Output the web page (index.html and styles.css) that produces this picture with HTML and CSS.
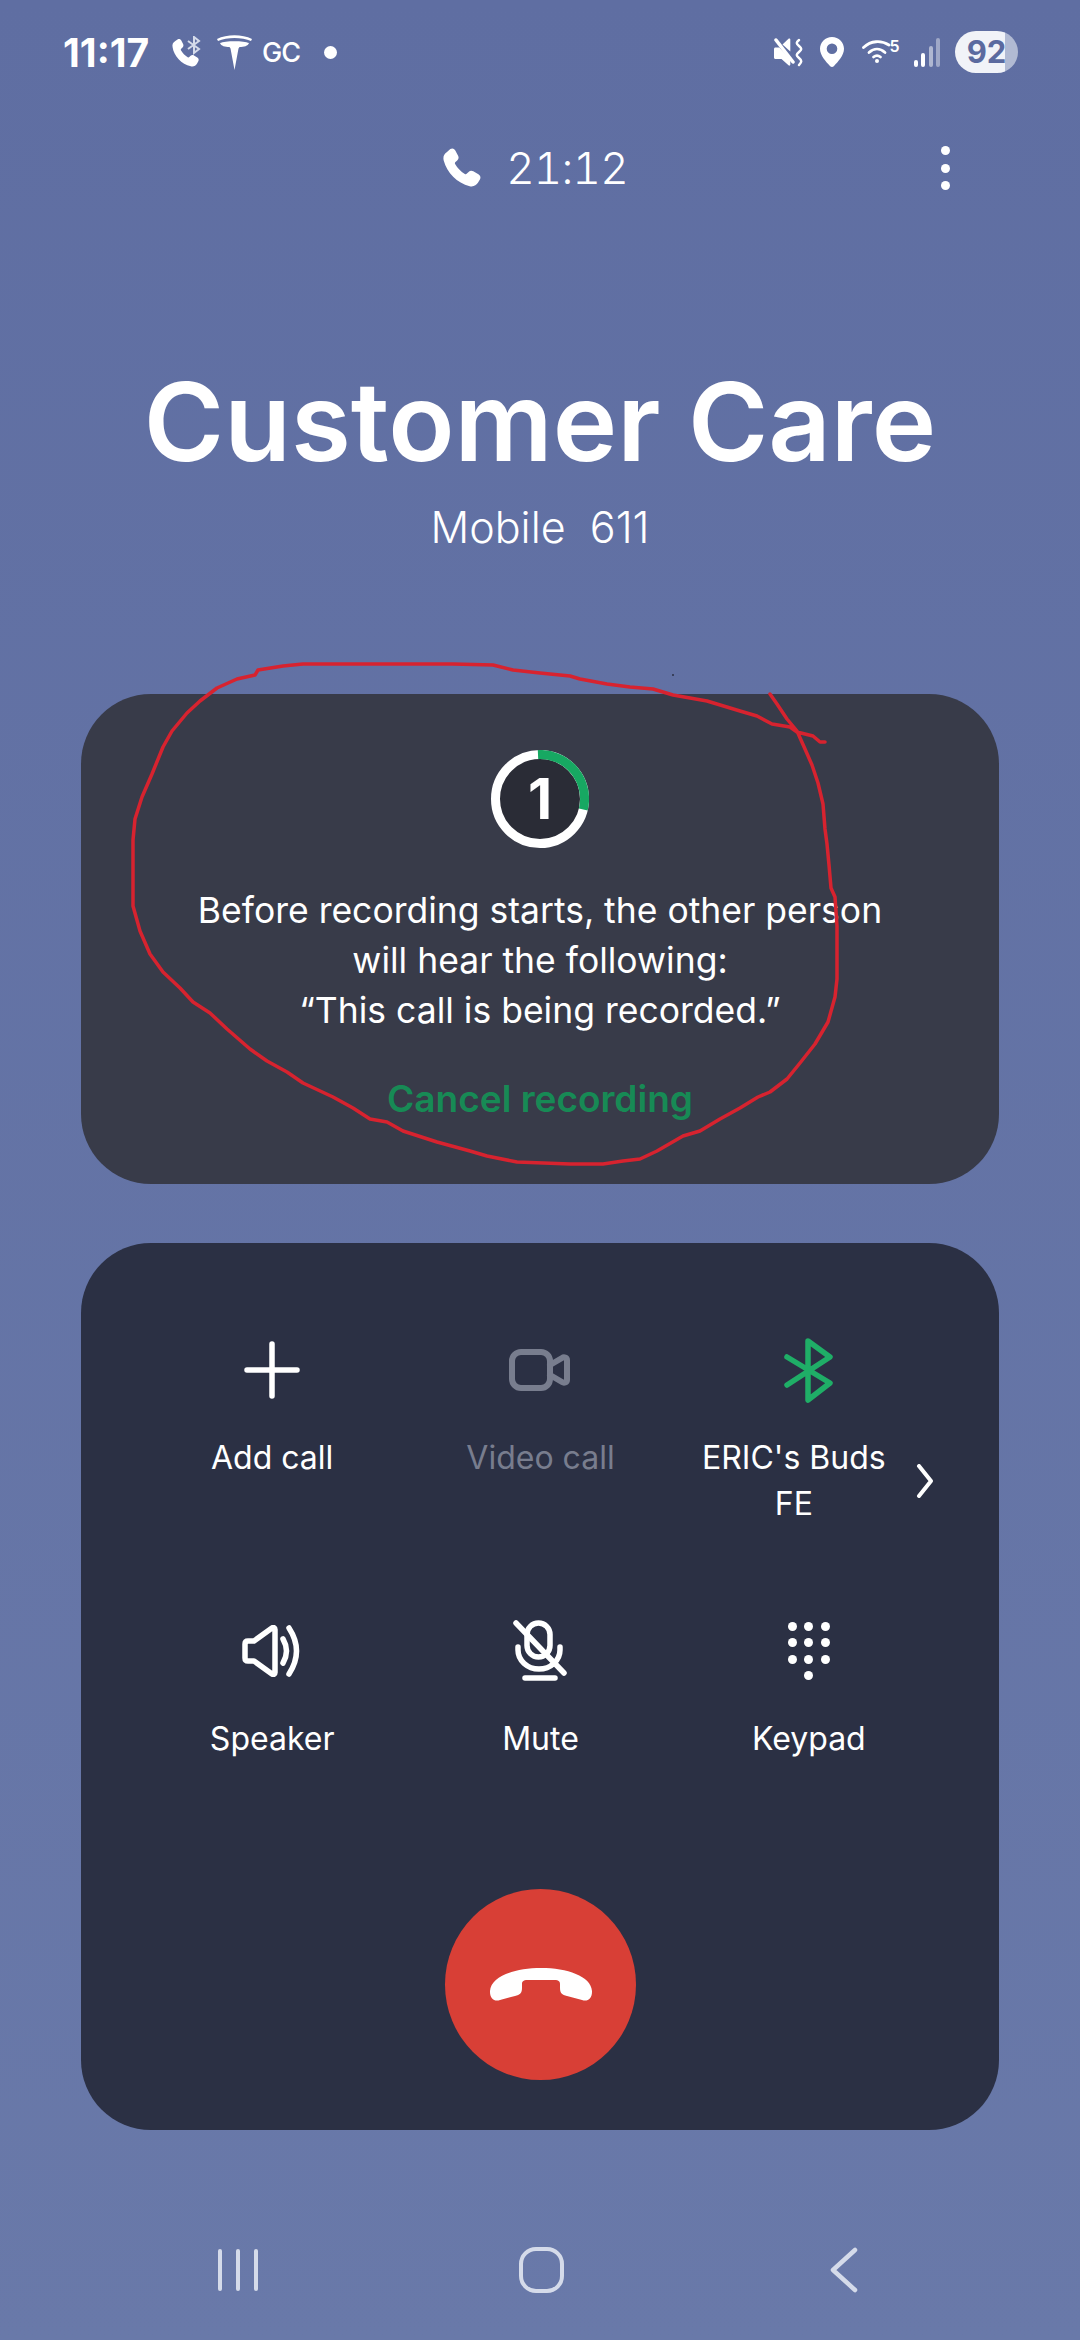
FILE: index.html
```html
<!DOCTYPE html>
<html lang="en">
<head>
  <meta charset="UTF-8">
  <title>Customer Care - Call</title>
  <link rel="stylesheet" href="styles.css">
</head>
<body>
  <div class="screen">
    <div class="status-bar">
      <div class="status-left">
        <span class="clock">11:17</span>
        <svg class="ic-callbt" viewBox="0 0 30 32">
          <path class="solid" d="M5.500 3.500c1.500-.8 3-.4 3.800 1.100l1.800 3.500c.6 1.200.4 2.500-.6 3.400l-1.300 1.200c-.5.500-.6 1-.3 1.600 1.700 3 4 5.300 6.800 6.900.6.300 1.100.3 1.600-.2l1.300-1.200c1-.9 2.300-1 3.400-.4l3.300 2c1.400.8 1.800 2.400 1 3.800l-1.200 2.200c-1.300 2.300-3.700 3.500-6.300 2.800C9.500 28.300 1.800 19.700.6 11.200 0 8.600 1 6.300 3.300 5z"/>
          <path class="bt-small" d="M16 5l11 8-5 4V1l5 4-11 8"/>
        </svg>
        <svg class="ic-tesla" viewBox="0 0 35 35">
          <path class="solid" d="M0 4C10-1 25-1 35 4l-1 2C25 2 10 2 1 6z"/>
          <path class="solid" d="M3 8c5-2.500 24-2.500 29 0-1 3-5 4-9.500 4l-1 1.500-4 21.500-4-21.500-1-1.500C8 12 4 11 3 8z"/>
        </svg>
        <span class="gc">GC</span>
        <span class="dot"></span>
      </div>
      <div class="status-right">
        <svg class="ic-mute" viewBox="0 0 30 29">
          <path class="solid" d="M0 11c0-1 .6-1.600 1.500-1.600h3.800l11 11.500v5.600c0 1-1 1.500-1.800.8L7.500 21H1.500C.6 21 0 20.400 0 19.500z"/>
          <path class="solid" d="M8.500 6.500L14.500.8c.8-.7 1.800-.2 1.800.8v12z"/>
          <path class="line" d="M2 2l17 22"/>
          <path class="wave" d="M25 2c-3 2.500-3 3.500 0 6 3 2.500 3 3.500 0 6-3 2.500-3 3.500 0 6 3 2.500 3 3.500 0 7"/>
        </svg>
        <svg class="ic-pin" viewBox="0 0 24 30">
          <path class="solid" fill-rule="evenodd" d="M12 0c6.800 0 12 5.200 12 11.800 0 6.500-5.800 12.800-10.200 17.400-1 1-2.600 1-3.600 0C5.800 24.600 0 18.300 0 11.800 0 5.200 5.200 0 12 0zm0 6.500a5.300 5.300 0 1 0 0 10.600 5.300 5.300 0 0 0 0-10.600z"/>
        </svg>
        <div class="wifi">
          <svg class="ic-wifi" viewBox="0 0 30 25">
            <path class="wifi-arc" d="M1.500 9.500C9 2.500 19 2 27 7"/>
            <path class="wifi-arc" d="M7 14.500c5-4.500 11-4.500 16 0"/>
            <path class="wifi-arc" d="M11.500 19c2.500-2 4.500-2 7 0"/>
            <circle class="solid" cx="15" cy="23" r="2"/>
          </svg>
          <span class="wifi-num">5</span>
        </div>
        <div class="signal">
          <span class="bar bar-1"></span>
          <span class="bar bar-2"></span>
          <span class="bar bar-3"></span>
          <span class="bar bar-4"></span>
        </div>
        <div class="battery">92</div>
      </div>
    </div>

    <div class="call-time-row">
      <div class="call-time">
        <svg class="ic-phone" viewBox="0 0 40 40">
          <path class="solid" d="M8.300 1c2-1.100 3.900-.5 5 1.500l2.800 5.200c.9 1.700.5 3.500-.9 4.700l-1.700 1.500c-.7.600-.8 1.300-.4 2.100 2.400 4.200 5.600 7.500 9.700 9.900.8.400 1.500.4 2.100-.3l1.700-1.700c1.300-1.300 3.100-1.500 4.700-.6l5.100 2.900c2 1.200 2.600 3.200 1.500 5.200l-1.800 3.200c-1.700 3-5 4.500-8.400 3.600C15 35 5 24.500 1.700 12.400.8 9 2 6 5 4.100z"/>
        </svg>
        <span>21:12</span>
      </div>
      <div class="more-menu">
        <span></span><span></span><span></span>
      </div>
    </div>

    <h1 class="caller-name">Customer Care</h1>
    <p class="caller-number">Mobile&nbsp; 611</p>

    <div class="card record-card">
      <div class="countdown">
        <svg class="countdown-ring" viewBox="0 0 98 98">
          <circle class="ring-disc" cx="49" cy="49" r="44.500"/>
          <circle class="ring-white" cx="49" cy="49" r="44.500"/>
          <path class="ring-green" d="M47 4.500A44.500 44.500 0 0 1 92.300 59.500"/>
        </svg>
        <span class="countdown-num">1</span>
      </div>
      <p class="record-text">Before recording starts, the other person<br>will hear the following:<br>“This call is being recorded.”</p>
      <a class="cancel-link">Cancel recording</a>
    </div>

    <div class="card controls-card">
      <div class="controls">
        <div class="control">
          <div class="control-icon">
            <svg class="ic-plus" viewBox="0 0 56 58"><path class="stroke" d="M28 3v52M3 29h50"/></svg>
          </div>
          <span class="control-label">Add call</span>
        </div>
        <div class="control disabled">
          <div class="control-icon">
            <svg class="ic-video" viewBox="0 0 62 42">
              <rect class="stroke-grey" x="3" y="3" width="38" height="36" rx="9"/>
              <path class="stroke-grey" d="M41 16l12-7c2-1.300 5-.5 5 2v20c0 2.500-3 3.300-5 2l-12-7"/>
            </svg>
          </div>
          <span class="control-label">Video call</span>
        </div>
        <div class="control control-bt">
          <div class="control-icon">
            <svg class="ic-bluetooth" viewBox="0 0 49 65"><path class="stroke-green" d="M3 19l43 26-22 17V3l22 16L3 47"/></svg>
          </div>
          <div class="bt-label-row">
            <span class="control-label">ERIC's Buds<br>FE</span>
            <svg class="ic-chevron" viewBox="0 0 18 34"><path class="stroke-thin" d="M3 2l12 15L3 32"/></svg>
          </div>
        </div>
        <div class="control">
          <div class="control-icon">
            <svg class="ic-speaker" viewBox="0 0 60 52">
              <path class="stroke" d="M3 19c0-2 1-3 3-3h6L30 3c1.500-1 3-.3 3 1.500v43c0 1.800-1.500 2.500-3 1.500L12 36H6c-2 0-3-1-3-3z"/>
              <path class="stroke" d="M41 14q7 12 0 24"/>
              <path class="stroke" d="M47 3q15 23 0 46"/>
            </svg>
          </div>
          <span class="control-label">Speaker</span>
        </div>
        <div class="control">
          <div class="control-icon">
            <svg class="ic-mic" viewBox="0 0 54 62">
              <rect class="stroke" x="14" y="3" width="23" height="34" rx="11.500"/>
              <path class="stroke" d="M5 27v3a21 19 0 0 0 42 0v-3"/>
              <path class="stroke" d="M12 58h30"/>
              <path class="stroke" d="M3 3l48 50"/>
            </svg>
          </div>
          <span class="control-label">Mute</span>
        </div>
        <div class="control">
          <div class="control-icon">
            <div class="keypad">
              <span></span><span></span><span></span>
              <span></span><span></span><span></span>
              <span></span><span></span><span></span>
              <span class="key-last"></span>
            </div>
          </div>
          <span class="control-label">Keypad</span>
        </div>
      </div>
      <div class="end-call">
        <svg class="ic-hangup" viewBox="0 0 104 34">
          <path class="solid" d="M1 23C2 8 26 0 52 0s50 8 51 23c.3 7-4 11-10 9l-15-4c-5-1.300-7-3-7-8v-4c0-3-2-4-5-4H38c-3 0-5 1-5 4v4c0 5-2 6.700-7 8l-15 4c-6 2-10.300-2-10-9z"/>
        </svg>
      </div>
    </div>

    <div class="nav-bar">
      <div class="nav-recents"><span></span><span></span><span></span></div>
      <div class="nav-home"></div>
      <svg class="ic-back" viewBox="0 0 28 46"><path class="nav-stroke" d="M25 3L3 23l22 20"/></svg>
    </div>

    <!-- hand drawn red circle on top of the screenshot -->
    <svg class="scribble" viewBox="0 0 1080 2340">
      <path class="scribble-line" d="M825 742 820 742 813 736 797 732 790 727 772 724 757 716 740 711 707 701 673 695 653 689 630 687 607 684 580 679 570 676 540 673 513 670 493 665 453 664 303 664 283 666 258 670 255 675 237 679 217 688 200 701 187 713 172 731 163 747 152 774 142 797 135 819 133 840 133 906 140 931 150 954 163 972 180 988 193 1002 210 1013 227 1029 250 1049 267 1061 287 1072 303 1083 333 1097 353 1108 370 1119 387 1122 403 1131 437 1142 470 1151 487 1156 517 1162 570 1164 603 1164 623 1161 640 1159 657 1151 683 1136 700 1131 720 1119 740 1108 758 1097 770 1092 787 1079 800 1063 815 1044 828 1022 835 997 837 979 837 926 835 897 831 888 829 865 827 844 825 829 823 804 818 783 812 765 805 749 797 731 787 719 777 704 770 694"/>
      <circle class="scribble-dot" cx="673" cy="675" r="1"/>
    </svg>
  </div>
</body>
</html>
```

FILE: styles.css
```css
body {
  margin: 0;
  padding: 0;
  font-family: Inter, "Noto Sans", sans-serif;
  color: #ffffff;
}
.screen {
  position: relative;
  width: 1080px;
  height: 2340px;
  overflow: hidden;
  background: linear-gradient(180deg, #5f6ea2 0%, #6979a9 100%);
}
svg {
  display: block;
  flex: none;
}
.solid {
  fill: #ffffff;
}

/* status bar */
.status-bar {
  display: flex;
  justify-content: space-between;
  align-items: center;
  height: 104px;
  padding: 0 62px 0 63px;
}
.status-left,
.status-right {
  display: flex;
  align-items: center;
}
.clock {
  font-size: 39px;
  font-weight: 700;
  width: 88px;
  white-space: nowrap;
}
.ic-callbt {
  width: 30px;
  height: 32px;
  margin-left: 21px;
}
.bt-small {
  fill: none;
  stroke: #d5dbea;
  stroke-width: 2;
}
.ic-tesla {
  width: 35px;
  height: 35px;
  margin-left: 15px;
}
.gc {
  width: 40px;
  margin-left: 10px;
  font-size: 27px;
  font-weight: 500;
  letter-spacing: -1px;
  line-height: 1;
}
.dot {
  width: 13px;
  height: 13px;
  margin-left: 22px;
  border-radius: 50%;
  background: #ffffff;
}
.ic-mute {
  width: 30px;
  height: 29px;
}
.line {
  fill: none;
  stroke: #ffffff;
  stroke-width: 3.500;
  stroke-linecap: round;
}
.wave {
  fill: none;
  stroke: #ffffff;
  stroke-width: 2.500;
  stroke-linecap: round;
}
.ic-pin {
  width: 24px;
  height: 30px;
  margin-left: 16px;
}
.wifi {
  display: flex;
  align-items: flex-start;
  width: 38px;
  margin-left: 18px;
  margin-top: -4px;
}
.ic-wifi {
  width: 30px;
  height: 25px;
}
.wifi-num {
  margin-left: -2px;
  font-size: 16px;
  font-weight: 600;
  line-height: 16px;
}
.wifi-arc {
  fill: none;
  stroke: #ffffff;
  stroke-width: 2.800;
  stroke-linecap: round;
}
.signal {
  display: flex;
  align-items: flex-end;
  gap: 3.500px;
  height: 29px;
  margin-left: 14px;
}
.bar {
  width: 4px;
  border-radius: 2px;
  background: #ffffff;
}
.bar-1 {
  height: 7px;
}
.bar-2 {
  height: 14px;
}
.bar-3 {
  height: 21px;
  background: rgba(255, 255, 255, 0.5);
}
.bar-4 {
  height: 29px;
  background: rgba(255, 255, 255, 0.4);
}
.battery {
  width: 63px;
  height: 42px;
  margin-left: 15px;
  border-radius: 21px;
  background: linear-gradient(90deg, #f1f3f8 0%, #f1f3f8 80%, #b1bad3 80%);
  color: #5b6a9f;
  font-size: 31px;
  font-weight: 700;
  line-height: 42px;
  text-align: center;
}

/* timer row */
.call-time-row {
  display: flex;
  justify-content: center;
  align-items: center;
  position: relative;
  height: 40px;
  margin-top: 44px;
}
.call-time {
  display: flex;
  align-items: center;
  gap: 24px;
  margin-right: 10px;
  font-size: 44px;
  font-weight: 300;
  font-variant-numeric: tabular-nums;
  letter-spacing: -0.8px;
}
.ic-phone {
  width: 40px;
  height: 40px;
}
.more-menu {
  position: absolute;
  right: 130px;
  top: -2px;
  display: flex;
  flex-direction: column;
  gap: 8.500px;
}
.more-menu span {
  width: 9px;
  height: 9px;
  border-radius: 50%;
  background: #ffffff;
}

/* caller */
.caller-name {
  margin: 166px 0 0;
  font-size: 109px;
  font-weight: 600;
  line-height: 134px;
  text-align: center;
}
.caller-number {
  margin: 13px 0 0;
  font-size: 43px;
  font-weight: 300;
  line-height: 52px;
  text-align: center;
}

/* cards */
.card {
  margin: 0 81px;
  border-radius: 70px;
}
.record-card {
  display: flex;
  flex-direction: column;
  align-items: center;
  height: 490px;
  margin-top: 141px;
  padding-top: 56px;
  box-sizing: border-box;
  background: #383b49;
}
.countdown {
  position: relative;
  display: flex;
  justify-content: center;
  align-items: center;
  width: 98px;
  height: 98px;
}
.countdown-ring {
  position: absolute;
  top: 0;
  left: 0;
  width: 98px;
  height: 98px;
}
.ring-disc {
  fill: #2a2c36;
}
.ring-white {
  fill: none;
  stroke: #ffffff;
  stroke-width: 9;
}
.ring-green {
  fill: none;
  stroke: #17a862;
  stroke-width: 9;
}
.countdown-num {
  position: relative;
  font-size: 56px;
  font-weight: 700;
  line-height: 1;
}
.record-text {
  margin: 38px 0 0;
  font-size: 35.500px;
  line-height: 50px;
  text-align: center;
}
.cancel-link {
  margin-top: 38px;
  color: #178a55;
  font-size: 37px;
  font-weight: 600;
  line-height: 50px;
}
.controls-card {
  height: 887px;
  margin-top: 59px;
  padding: 95px 56px 0 57px;
  box-sizing: border-box;
  background: #2b3044;
}
.controls {
  display: grid;
  grid-template-columns: repeat(3, 1fr);
  grid-template-rows: 281px 270px;
}
.control {
  display: flex;
  flex-direction: column;
  align-items: center;
}
.control-icon {
  display: flex;
  justify-content: center;
  align-items: center;
  height: 64px;
  margin-bottom: 33px;
}
.control-label {
  font-size: 32px;
  line-height: 46px;
  text-align: center;
}
.disabled .control-label {
  color: #787d8e;
}
.stroke,
.stroke-thin,
.stroke-grey,
.stroke-green {
  fill: none;
  stroke-linecap: round;
  stroke-linejoin: round;
  stroke-width: 5.500;
}
.stroke {
  stroke: #ffffff;
}
.stroke-thin {
  stroke: #ffffff;
  stroke-width: 4;
}
.stroke-grey {
  stroke: #787d8e;
  stroke-width: 6;
}
.stroke-green {
  stroke: #1fae67;
}
.ic-plus {
  width: 56px;
  height: 58px;
}
.ic-video {
  width: 62px;
  height: 42px;
}
.ic-bluetooth {
  width: 49px;
  height: 65px;
}
.bt-label-row {
  display: flex;
  align-items: center;
  gap: 30px;
  margin-left: 18px;
}
.ic-chevron {
  width: 18px;
  height: 34px;
}
.ic-speaker {
  width: 60px;
  height: 52px;
}
.ic-mic {
  width: 54px;
  height: 62px;
}
.keypad {
  display: grid;
  grid-template-columns: repeat(3, 9px);
  grid-auto-rows: 9px;
  gap: 7.500px;
}
.keypad span {
  border-radius: 50%;
  background: #ffffff;
}
.keypad .key-last {
  grid-column: 2;
}
.end-call {
  display: flex;
  justify-content: center;
  align-items: center;
  width: 191px;
  height: 191px;
  margin: 0 auto;
  border-radius: 50%;
  background: #d83f36;
}
.ic-hangup {
  width: 104px;
  height: 34px;
}

/* nav bar */
.nav-bar {
  display: flex;
  justify-content: space-between;
  align-items: center;
  height: 46px;
  margin-top: 117px;
  padding: 0 222px 0 218px;
}
.nav-recents {
  display: flex;
  gap: 14px;
}
.nav-recents span {
  width: 4px;
  height: 42px;
  border-radius: 2px;
  background: #d5dbea;
}
.nav-home {
  width: 45px;
  height: 46px;
  margin-right: 6px;
  box-sizing: border-box;
  border: 4px solid #d5dbea;
  border-radius: 17px;
}
.ic-back {
  width: 28px;
  height: 46px;
}
.nav-stroke {
  fill: none;
  stroke: #d5dbea;
  stroke-width: 4.500;
  stroke-linecap: round;
  stroke-linejoin: round;
}

/* red pen scribble */
.scribble {
  position: absolute;
  top: 0;
  left: 0;
  width: 1080px;
  height: 2340px;
  pointer-events: none;
}
.scribble-line {
  fill: none;
  stroke: #d7232f;
  stroke-width: 3.500;
  stroke-linejoin: round;
  stroke-linecap: round;
}
.scribble-dot {
  fill: #2b3044;
}
```
